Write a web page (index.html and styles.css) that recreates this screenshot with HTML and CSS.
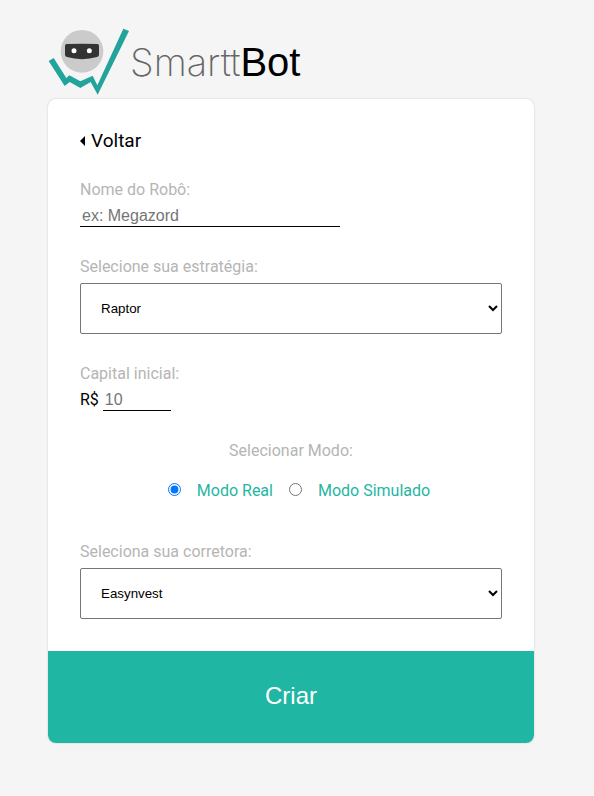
FILE: index.html
```html
<!DOCTYPE html>
<html lang="pt-BR">
<head>
  <meta charset="utf-8">
  <meta name="viewport" content="width=device-width, initial-scale=1">
  <title>SmarttBot</title>
  <link rel="stylesheet" href="styles.css">
</head>
<body>
  <header class="brand">
    <svg class="brand-mark" viewBox="24 24 246 204" aria-hidden="true">
      <circle cx="126" cy="94" r="64" fill="#cbcbcb"/>
      <path d="M80 72Q126 70 172 72Q177 72 177 78V104Q177 109 171 111Q126 124 81 111Q75 109 75 104V78Q75 72 80 72Z" fill="#333"/>
      <circle cx="102" cy="92" r="7.500" fill="#fff"/>
      <circle cx="148" cy="92" r="7.500" fill="#fff"/>
      <path d="M26 123L41 114L79 174L88 166L121 184L158 167L172 196L250 26L267 33L173 224L152 186L121 204L89 186L74 198Z" fill="#22a39b"/>
    </svg>
    <span class="brand-name"><span class="brand-light">Smartt</span>Bot</span>
  </header>
  <main>
    <form class="card">
      <div class="card-body">
        <a class="back" href="#">
          <svg class="back-icon" viewBox="0 0 5 10" aria-hidden="true"><path d="M5 0V10L0 5Z"/></svg>
          Voltar
        </a>
        <div class="field">
          <label for="name">Nome do Robô:</label>
          <input class="line-input" id="name" type="text" placeholder="ex: Megazord">
        </div>
        <div class="field">
          <label for="strategy">Selecione sua estratégia:</label>
          <select id="strategy"><option>Raptor</option></select>
        </div>
        <div class="field">
          <label for="capital">Capital inicial:</label>
          <div class="money">
            <span>R$</span>
            <input class="line-input amount" id="capital" type="text" placeholder="10">
          </div>
        </div>
        <fieldset class="modes">
          <legend>Selecionar Modo:</legend>
          <div class="mode-list">
            <label class="mode"><input type="radio" name="mode" checked>Modo Real</label>
            <label class="mode"><input type="radio" name="mode">Modo Simulado</label>
          </div>
        </fieldset>
        <div class="field">
          <label for="broker">Seleciona sua corretora:</label>
          <select id="broker"><option>Easynvest</option></select>
        </div>
      </div>
      <button class="submit" type="submit">Criar</button>
    </form>
  </main>
</body>
</html>
```
FILE: styles.css
```css
* {
  box-sizing: border-box;
}

body {
  margin: 0;
  padding: 28px 60px 52px 48px;
  background: #f5f5f5;
  color: #000;
  font: 16px/19px Roboto, sans-serif;
}

.brand {
  display: flex;
  align-items: flex-start;
  height: 71px;
}

.brand-mark {
  width: 82px;
  height: 68px;
}

.brand-name {
  padding-top: 10px;
  font-family: "Liberation Sans", Arial, sans-serif;
  font-size: 40px;
  line-height: 48px;
  font-weight: 400;
}

.brand-light {
  color: #666;
  font-family: Inter, sans-serif;
  font-size: 38px;
  font-weight: 200;
}

.card {
  border-radius: 8px;
  background: #fff;
  box-shadow: 0 0 2px rgba(0, 0, 0, 0.2);
  overflow: hidden;
}

.card-body {
  display: flex;
  flex-direction: column;
  gap: 30px;
  padding: 32px;
}

.back {
  display: flex;
  align-items: center;
  align-self: flex-start;
  gap: 6px;
  color: #000;
  font-size: 19px;
  line-height: 19px;
  text-decoration: none;
}

.back-icon {
  width: 5px;
  height: 10px;
}

.field {
  display: flex;
  flex-direction: column;
  align-items: flex-start;
  gap: 7px;
  color: #b5b5b5;
}

.line-input {
  width: 260px;
  max-width: 100%;
  height: 21px;
  padding: 1px 2px;
  border: 0;
  border-bottom: 1px solid #000;
  background: transparent;
  font: 16px "Liberation Sans", Arial, sans-serif;
}

select {
  width: 100%;
  height: 51px;
  padding: 0 16px;
  border: 1px solid #767676;
  border-radius: 2px;
  background: #fff;
  color: #000;
  font-family: "Liberation Sans", Arial, sans-serif;
}

.money {
  display: flex;
  align-items: flex-start;
  gap: 4px;
  color: #000;
}

.amount {
  width: 68px;
}

.modes {
  margin: 0;
  padding: 0 0 12px;
  border: 0;
  text-align: center;
}

legend {
  margin: 0 auto;
  padding: 0;
  color: #b5b5b5;
}

.mode-list {
  display: flex;
  justify-content: center;
  gap: 16px;
  padding: 21px 0 0 16px;
}

.mode {
  display: flex;
  align-items: center;
  gap: 16px;
  color: #1fb6a3;
}

.mode input {
  width: 13px;
  height: 13px;
  margin: 0 0 2px;
}

.submit {
  display: block;
  width: 100%;
  height: 92px;
  padding: 0 0 2px;
  border: 0;
  background: #1fb6a3;
  color: #fff;
  font: 24px "Liberation Sans", Arial, sans-serif;
}
```
